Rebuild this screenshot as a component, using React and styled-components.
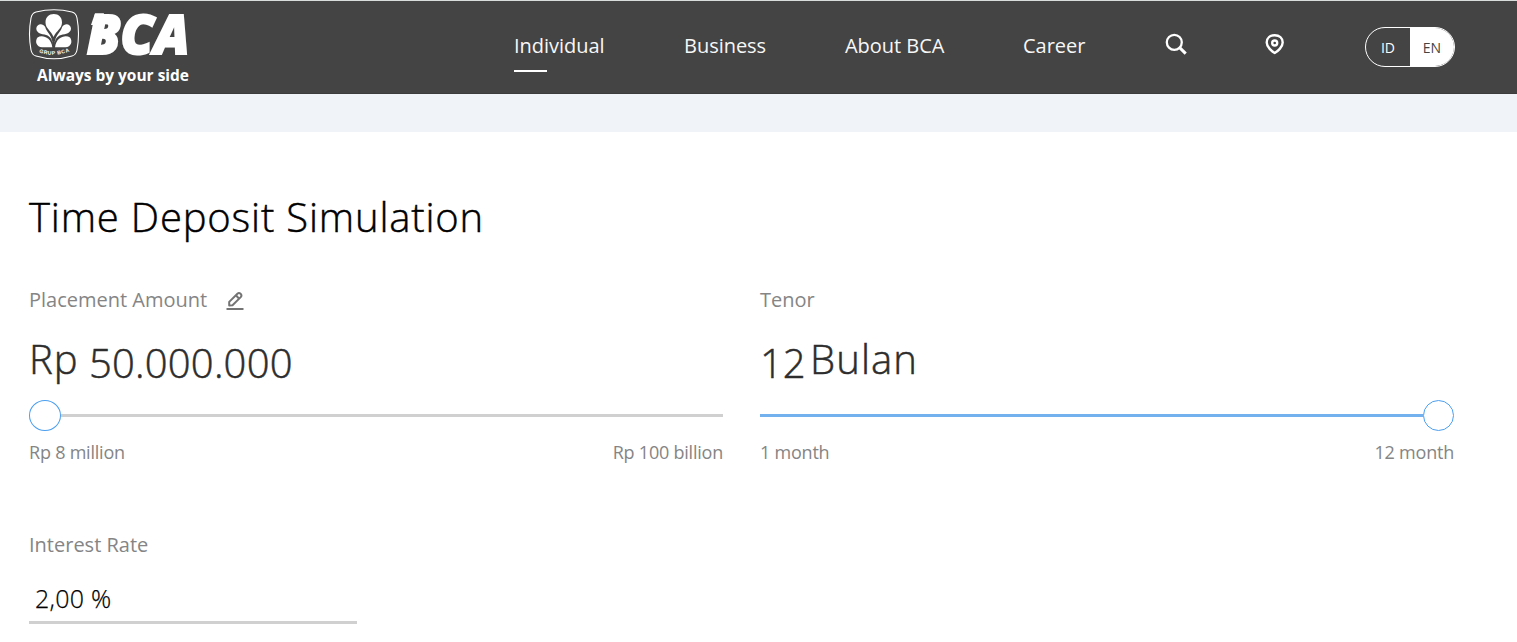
import React from "react";
import styled, { createGlobalStyle } from "styled-components";

const GlobalStyle = createGlobalStyle`
  *, *::before, *::after { box-sizing: border-box; }
  body {
    margin: 0;
    background: #fff;
    color: #2d2d2d;
    font-family: "Open Sans", "Noto Sans", sans-serif;
    overflow: hidden;
  }
  h1, p { margin: 0; font-weight: 400; }
`;

const Page = styled.div`
  height: 642px;
  overflow: hidden;
`;

const Header = styled.header`
  display: flex;
  align-items: flex-start;
  height: 94px;
  padding-left: 28px;
  background: #444;
  border-top: 1px solid #d9dedd;
  border-bottom: 1px solid #3c3c3c;
  color: #fff;
`;

const Brand = styled.a`
  display: block;
  width: 164px;
  height: 90px;
  margin-right: 322px;
  svg { display: block; overflow: visible; }
`;

const Nav = styled.nav`
  display: flex;
  padding-top: 31px;
`;

const NavItem = styled.a`
  width: ${(p) => p.$width}px;
  font-size: 20px;
  line-height: 28px;
  font-weight: 500;
  letter-spacing: -0.03px;
  color: #f7f7f7;
  white-space: nowrap;
  &::after {
    content: "";
    display: ${(p) => (p.$active ? "block" : "none")};
    width: 33px;
    height: 2px;
    margin-top: 10px;
    background: #fff;
  }
`;

const IconLink = styled.a`
  width: ${(p) => p.$width}px;
  padding-top: 1px;
  svg { display: block; }
`;

const LanguageSwitch = styled.div`
  display: flex;
  width: 90px;
  height: 40px;
  margin-top: 26px;
  border: 1px solid #fff;
  border-radius: 20px;
  overflow: hidden;
`;

const Language = styled.span`
  flex: 1;
  text-align: center;
  font-size: 14px;
  line-height: 39px;
  font-weight: ${(p) => (p.$active ? 400 : 500)};
  background: ${(p) => (p.$active ? "#fff" : "transparent")};
  color: ${(p) => (p.$active ? "#444" : "#fff")};
`;

const Band = styled.div`
  height: 38px;
  background: #f0f4f8;
`;

const Main = styled.main`
  padding: 57px 63px 0 29px;
`;

const Title = styled.h1`
  font-size: 40px;
  line-height: 56px;
  font-weight: 300;
  letter-spacing: 0.82px;
  -webkit-text-stroke: 0.45px currentColor;
  color: #000;
`;

const Fields = styled.div`
  display: grid;
  grid-template-columns: 694px 694px;
  column-gap: 37px;
  margin-top: 41px;
`;

const Label = styled.div`
  display: flex;
  align-items: center;
  gap: 19px;
  height: 28px;
  font-size: 20px;
  line-height: 28px;
  color: #858585;
  font-weight: 400;
`;

const Amount = styled.div`
  display: flex;
  height: 60px;
  margin-top: 17px;
  font-size: 40px;
  line-height: 56px;
  font-weight: 300;
  -webkit-text-stroke: 0.5px currentColor;
  color: #2d2d2d;
  white-space: nowrap;
`;

const Word = styled.span`
  width: ${(p) => p.$width || "auto"};
  letter-spacing: ${(p) => p.$spacing || 0}px;
`;

const Value = styled(Word)`
  padding-top: 4px;
`;

const Slider = styled.div`
  display: flex;
  align-items: center;
  flex-direction: ${(p) => (p.$full ? "row-reverse" : "row")};
  height: 31px;
  margin-top: 9px;
`;

const Handle = styled.span`
  width: ${(p) => (p.$full ? 31 : 32)}px;
  height: 31px;
  border: 1px solid #4b9ff0;
  border-radius: 50%;
  background: #fff;
`;

const Track = styled.span`
  flex: 1;
  height: 3px;
  background: ${(p) => (p.$full ? "#73b0ee" : "#d0d0d0")};
`;

const Limits = styled.div`
  display: flex;
  justify-content: space-between;
  margin-top: 8px;
  font-size: 18px;
  line-height: 26px;
  font-weight: 400;
  letter-spacing: -0.22px;
  color: #858585;
`;

const Rate = styled.section`
  width: 328px;
  margin-top: 66px;
`;

const RateValue = styled.p`
  height: 65px;
  padding: 22px 6px 0;
  border-bottom: 3px solid #d0d0d0;
  font-size: 25px;
  line-height: 34px;
  font-weight: 300;
  letter-spacing: 0.25px;
  -webkit-text-stroke: 0.25px currentColor;
  color: #000;
`;

function Logo() {
  return (
    <svg width="164" height="90" viewBox="28 1 164 90" fill="#fff">
      <path
        d="M36 12Q54 7.500 72 12Q76 13 77 18Q80 34 77 50Q76 55 72 56Q54 61.500 36 56Q32 55 31 50Q28 34 31 18Q32 13 36 12Z"
        fill="none"
        stroke="#fff"
        strokeWidth="1.1"
      />
      <path d="M53.500 37C51 30.500 45.500 28.500 45.500 22.500C45.500 17 49 14 53.800 14S62 17 62 22.500C62 28.500 56.500 30.500 53.500 37Z" />
      <path d="M52.700 45C52.300 38 49 35.500 44.500 34.500C39 34 36.300 31.500 36.300 28.500C36.500 24 42.500 22.500 45.200 27C46.500 32.500 52.500 35 52.700 45Z" />
      <path d="M54.500 45C54.900 38 58.200 35.500 62.700 34.500C68.200 34 71 31.500 71 28.500C70.800 24 64.800 22.500 62.100 27C60.800 32.500 54.700 35 54.500 45Z" />
      <path d="M52.300 47.200H42C36.500 47 34.500 41.500 37.500 37.500C42 34.500 51 37 52.300 47.200Z" />
      <path d="M55 47.200H65.500C71 47 73 41.500 70 37.500C65.500 34.500 56.300 37 55 47.200Z" />
      <path id="seal" d="M39 52.500Q54 57.500 69 51.500" fill="none" />
      <text fontFamily="Liberation Sans, sans-serif" fontSize="5.200" fontWeight="700" letterSpacing="0.5">
        <textPath href="#seal" startOffset="0">GRUP BCA</textPath>
      </text>
      <path d="M95 13.300H104L101 25H91Z" />
      <text
        x="87"
        y="54"
        fontFamily="Open Sans, sans-serif"
        fontSize="55"
        fontWeight="800"
        fontStyle="italic"
        textLength="102.500"
        lengthAdjust="spacingAndGlyphs"
        stroke="#fff"
        strokeWidth="2.200"
      >
        BCA
      </text>
      <text
        x="37"
        y="81"
        fontFamily="Open Sans, sans-serif"
        fontSize="15.800"
        fontWeight="700"
        textLength="152"
        lengthAdjust="spacingAndGlyphs"
      >
        Always by your side
      </text>
    </svg>
  );
}

function SearchIcon() {
  return (
    <svg width="24" height="24" viewBox="0 0 24 24" fill="none" stroke="#fff" strokeWidth="2.300">
      <circle cx="9.300" cy="9.300" r="7.500" />
      <path d="M14.900 14.900L20.700 20.600" strokeWidth="3" />
    </svg>
  );
}

function PinIcon() {
  return (
    <svg width="20" height="22" viewBox="0 0 20 22" fill="none" stroke="#fff" strokeWidth="2.400">
      <path d="M9.700 20C7 18.500 1.700 14 1.700 9.500C1.700 5 5.200 2.200 9.700 2.200S17.700 5 17.700 9.500C17.700 14 12.500 18.500 9.700 20Z" />
      <circle cx="9.700" cy="10" r="2.500" />
    </svg>
  );
}

function EditIcon() {
  return (
    <svg width="18" height="19" viewBox="0 0 18 19" fill="none" stroke="#747474" strokeWidth="2">
      <path d="M3.200 14.500V10.900L11.400 2.700Q13 1.300 14.600 2.800T14.700 6.100L6.500 14.200Z" strokeLinejoin="round" />
      <path d="M9.800 4.200L13 7.500" />
      <path d="M0.500 18H17.500" strokeWidth="2" />
    </svg>
  );
}

export default function App() {
  return (
    <Page>
      <GlobalStyle />
      <Header>
        <Brand aria-label="BCA"><Logo /></Brand>
        <Nav>
          <NavItem $width={170} $active>Individual</NavItem>
          <NavItem $width={161}>Business</NavItem>
          <NavItem $width={178}>About BCA</NavItem>
          <NavItem $width={142}>Career</NavItem>
          <IconLink $width={100} aria-label="Search"><SearchIcon /></IconLink>
          <IconLink $width={100} aria-label="Locations"><PinIcon /></IconLink>
        </Nav>
        <LanguageSwitch>
          <Language>ID</Language>
          <Language $active>EN</Language>
        </LanguageSwitch>
      </Header>
      <Band />
      <Main>
        <Title>Time Deposit Simulation</Title>
        <Fields>
          <section>
            <Label>Placement Amount <EditIcon /></Label>
            <Amount>
              <Word $width="60px" $spacing={1}>Rp</Word>
              <Value $spacing={0.2}>50.000.000</Value>
            </Amount>
            <Slider><Handle /><Track /></Slider>
            <Limits><span>Rp 8 million</span><span>Rp 100 billion</span></Limits>
          </section>
          <section>
            <Label>Tenor</Label>
            <Amount>
              <Value $width="50px">12</Value>
              <Word $spacing={1.1}>Bulan</Word>
            </Amount>
            <Slider $full><Handle $full /><Track $full /></Slider>
            <Limits><span>1 month</span><span>12 month</span></Limits>
          </section>
        </Fields>
        <Rate>
          <Label>Interest Rate</Label>
          <RateValue>2,00 %</RateValue>
        </Rate>
      </Main>
    </Page>
  );
}
